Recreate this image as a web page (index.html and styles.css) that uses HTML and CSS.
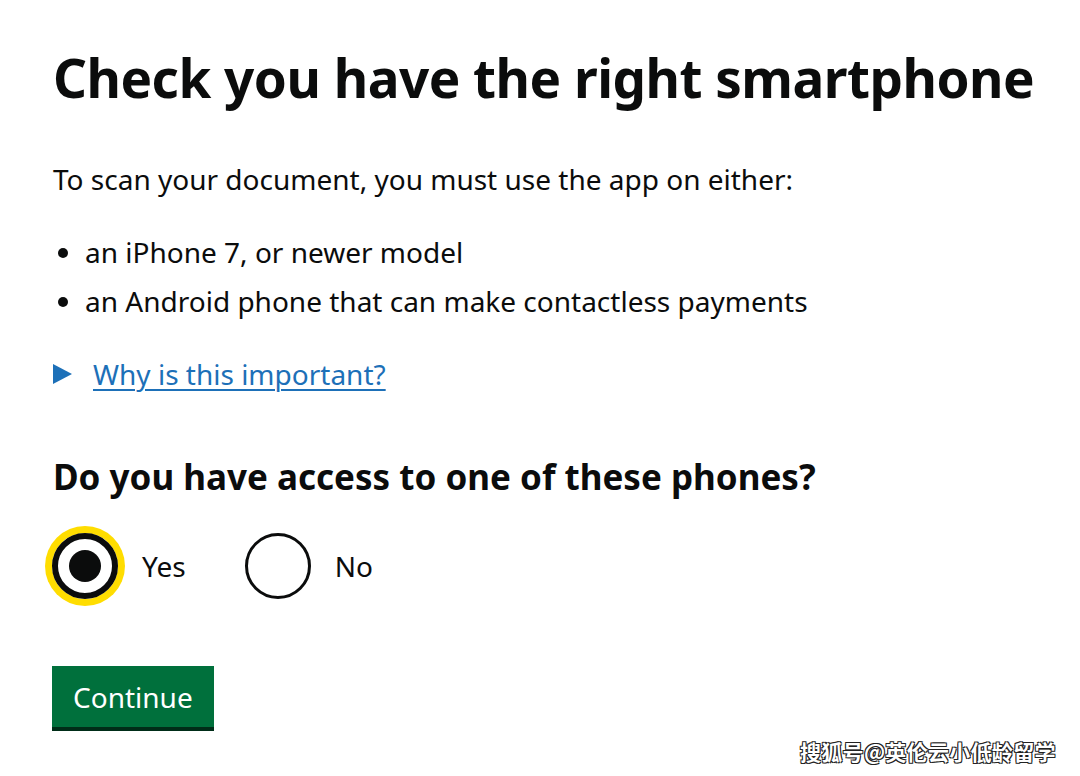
FILE: index.html
```html
<!DOCTYPE html>
<html lang="en">
<head>
<meta charset="utf-8">
<title>Check you have the right smartphone</title>
<link rel="stylesheet" href="styles.css">
</head>
<body>
<main class="page">
  <h1 class="title">Check you have the right smartphone</h1>
  <p class="body">To scan your document, you must use the app on either:</p>
  <ul class="list">
    <li>an iPhone 7, or newer model</li>
    <li>an Android phone that can make contactless payments</li>
  </ul>
  <div class="details">
    <span class="arrow"></span>
    <a class="details-link" href="#">Why is this important?</a>
  </div>
  <h2 class="question">Do you have access to one of these phones?</h2>
  <div class="radios">
    <label class="radio">
      <span class="radio-circle checked"><span class="radio-dot"></span></span>
      <span class="radio-label">Yes</span>
    </label>
    <label class="radio">
      <span class="radio-circle"></span>
      <span class="radio-label">No</span>
    </label>
  </div>
  <button class="button" type="button">Continue</button>
</main>
<div class="watermark">搜狐号@英伦云小低龄留学</div>
</body>
</html>
```

FILE: styles.css
```css
html, body {
  margin: 0;
  padding: 0;
  background: #ffffff;
}
body {
  font-family: "Noto Sans", "Liberation Sans", sans-serif;
  color: #0b0c0c;
  width: 1080px;
  height: 776px;
  overflow: hidden;
  position: relative;
}
.page {
  padding: 40px 0 0 53px;
  display: flex;
  flex-direction: column;
  align-items: flex-start;
}
.title {
  margin: 0;
  font-size: 53px;
  font-weight: 700;
  line-height: 76px;
  letter-spacing: -0.5px;
  white-space: nowrap;
}
.body {
  margin: 43px 0 0;
  font-size: 28px;
  line-height: 40px;
}
.list {
  margin: 29px 0 0;
  padding-left: 32px;
  font-size: 28px;
  line-height: 49px;
}
.details {
  margin-top: 28px;
  display: flex;
  align-items: center;
  gap: 21px;
  font-size: 28px;
  line-height: 40px;
}
.arrow {
  width: 0;
  height: 0;
  border-top: 10px solid transparent;
  border-bottom: 10px solid transparent;
  border-left: 19px solid #1d70b8;
}
.details-link {
  color: #1d70b8;
  text-decoration: underline;
  text-underline-offset: 4px;
  text-decoration-thickness: 2px;
}
.question {
  margin: 58px 0 0;
  font-size: 35px;
  font-weight: 700;
  line-height: 50px;
}
.radios {
  margin-top: 25px;
  display: flex;
  align-items: center;
  gap: 53px;
  margin-left: -7px;
}
.radio {
  display: flex;
  align-items: center;
  gap: 18px;
  font-size: 28px;
}
.radio-circle {
  box-sizing: border-box;
  width: 66px;
  height: 66px;
  border-radius: 50%;
  border: 3px solid #0b0c0c;
  display: flex;
  align-items: center;
  justify-content: center;
  margin: 6px;
}
.radio-circle.checked {
  border-width: 6px;
  box-shadow: 0 0 0 7px #ffdd00;
}
.radio-dot {
  width: 32px;
  height: 32px;
  border-radius: 50%;
  background: #0b0c0c;
}
.button {
  margin-top: 61px;
  margin-left: -1px;
  font-family: inherit;
  font-size: 28px;
  color: #ffffff;
  background: #00703c;
  border: 0;
  padding: 11px 21px 10px;
  line-height: 40px;
  box-shadow: 0 4px 0 #002d18;
  border-radius: 0;
}
.watermark {
  position: absolute;
  left: 800px;
  top: 736px;
  font-family: "Noto Sans CJK SC", sans-serif;
  font-size: 21px;
  font-weight: 700;
  color: #ffffff;
  letter-spacing: 0.3px;
  text-shadow: -1px -1px 0 #222, 1px -1px 0 #222, -1px 1px 0 #222, 1px 1px 0 #222;
}
```
